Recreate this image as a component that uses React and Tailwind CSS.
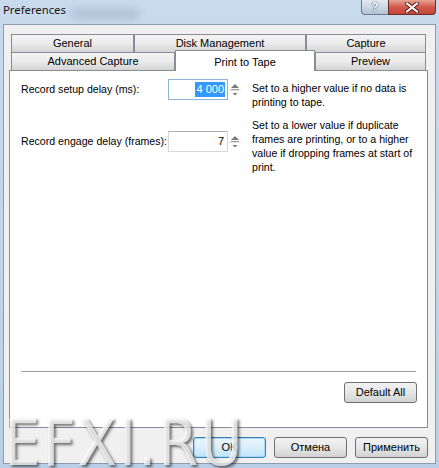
export default function App() {
  const tabBase =
    "h-[18px] border-t border-x border-[#898c95] bg-gradient-to-b from-[#f4f4f4] via-[#ebebeb] to-[#d4d4d4] flex items-center justify-center text-[11px] text-black";
  const btn =
    "w-[73px] h-[21px] rounded-[3px] border border-[#707070] bg-gradient-to-b from-[#f2f2f2] via-[#e6e6e6] to-[#d2d2d2] flex items-center justify-center text-[11px] text-black";
  return (
    <div className="relative w-[439px] h-[468px] overflow-hidden bg-gradient-to-b from-[#c8daee] to-[#b9cfe6] flex flex-col font-['Liberation_Sans',Arial,sans-serif]">
      {/* title bar */}
      <div className="relative h-[24px] flex items-start shrink-0">
        <div className="absolute left-[70px] top-[9px] w-[70px] h-[10px] rounded-full bg-[#8a9aac] opacity-40 blur-[4px]" />
        <span className="relative pl-[3px] pt-[2px] text-[11.3px] leading-[16px] text-[#161616] font-['Noto_Sans',sans-serif]">
          Preferences
        </span>
        <div className="ml-auto mr-[3px] flex">
          <div className="w-[27px] h-[15px] rounded-bl-[4px] border border-t-0 border-r-0 border-[#6c7b8e] bg-gradient-to-b from-[#e3eaf2] via-[#cdd8e4] to-[#b3c3d4] flex items-center justify-center">
            <span className="text-[12px] leading-[12px] font-bold text-white [text-shadow:0_0_1px_#3b4a5c,0_0_1px_#3b4a5c]">?</span>
          </div>
          <div className="w-[48px] h-[15px] rounded-br-[4px] border border-t-0 border-[#6b2a25] bg-gradient-to-b from-[#e6a596] via-[#d0594b] to-[#c5453b] flex items-center justify-center">
            <svg width="14" height="11" viewBox="0 0 14 11">
              <path d="M2 1.5 L12 9.5 M12 1.5 L2 9.5" stroke="#5a1c16" strokeWidth="4" strokeLinecap="round" />
              <path d="M2 1.5 L12 9.5 M12 1.5 L2 9.5" stroke="#ffffff" strokeWidth="2.2" strokeLinecap="round" />
            </svg>
          </div>
        </div>
      </div>

      {/* body */}
      <div className="flex-1 mx-[3px] mb-[4px] bg-[#f0f0f0] border border-[#8d9db0] flex flex-col pl-[5px] pt-[9px]">
        <div className="w-[419px] flex flex-col">
          <div className="flex pl-[2px]">
            <div className={`${tabBase} w-[123px]`}>General</div>
            <div className={`${tabBase} w-[172px]`}>Disk Management</div>
            <div className={`${tabBase} w-[120px]`}>Capture</div>
          </div>
          <div className="flex items-start pl-[2px]">
            <div className={`${tabBase} w-[164px]`}>Advanced Capture</div>
            <div className="relative z-10 w-[140px] h-[21px] -mt-[2px] -mb-[1px] border-t border-x border-[#898c95] bg-white flex items-start justify-center pt-[3px] text-[11px] text-black">
              Print to Tape
            </div>
            <div className={`${tabBase} w-[111px]`}>Preview</div>
          </div>
          <div className="h-[358px] border border-[#898c95] bg-white flex flex-col pt-[8px] text-[10.6px] text-black">
            {/* row 1 */}
            <div className="flex items-start pl-[11px]">
              <div className="w-[147px] h-[21px] flex items-center whitespace-nowrap">Record setup delay (ms):</div>
              <div className="w-[74px] h-[21px] flex">
                <div className="w-[60px] h-[21px] border border-[#8fb3d8] flex items-center justify-end pr-[2px] text-[11px]">
                  <span className="bg-[#3399ff] text-white px-[1px] leading-[15px]">4 000</span>
                </div>
                <Spin />
              </div>
              <div className="ml-[10px] mt-[2px] leading-[14px] whitespace-nowrap">
                Set to a higher value if no data is
                <br />
                printing to tape.
              </div>
            </div>
            {/* row 2 */}
            <div className="flex items-start pl-[11px] mt-[9px]">
              <div className="w-[147px] h-[21px] mt-[13px] flex items-center whitespace-nowrap">Record engage delay (frames):</div>
              <div className="w-[74px] h-[21px] mt-[13px] flex">
                <div className="w-[60px] h-[21px] border border-[#d5d9df] border-t-[#abadb3] flex items-center justify-end pr-[3px] text-[11px]">
                  7
                </div>
                <Spin />
              </div>
              <div className="ml-[10px] leading-[14px] whitespace-nowrap">
                Set to a lower value if duplicate
                <br />
                frames are printing, or to a higher
                <br />
                value if dropping frames at start of
                <br />
                print.
              </div>
            </div>

            <div className="mt-auto mx-[11px] border-t border-[#a0a0a0] border-b border-b-white" />
            <div className="self-end mr-[10px] mt-[9px] mb-[24px]">
              <div className={`${btn} h-[20px]`}>Default All</div>
            </div>
          </div>
        </div>

        <div className="flex justify-end gap-[8px] pr-[7px] mt-[9px]">
          <div className="w-[73px] h-[21px] rounded-[3px] border border-[#3c7fb1] bg-gradient-to-b from-[#eaf6fd] via-[#d9f0fc] to-[#bee6fd] flex items-center justify-center text-[11px] text-black shadow-[inset_0_0_0_1px_#a8d8f5]">
            OK
          </div>
          <div className={btn}>Отмена</div>
          <div className={btn}>Применить</div>
        </div>
      </div>

      {/* watermark */}
      <div className="absolute left-[4px] top-[408px] text-[64px] leading-[70px] tracking-[2px] text-[rgba(255,255,255,0.75)] font-['DejaVu_Sans_Condensed','DejaVu_Sans',sans-serif] [text-shadow:2px_2px_3px_rgba(0,0,0,0.55)] pointer-events-none select-none">
        EFXI.RU
      </div>
    </div>
  );
}

function Spin() {
  return (
    <div className="w-[14px] h-[21px]">
      <svg width="14" height="21" viewBox="0 0 14 21">
        <path d="M3 9 L7 5 L11 9 Z" fill="#7a7a7a" />
        <rect x="3" y="10" width="8" height="1" fill="#9a9a9a" />
        <rect x="1" y="11" width="12" height="1" fill="#e2e2e2" />
        <path d="M4.5 14 L9.5 14 L7 16.5 Z" fill="#7a7a7a" />
      </svg>
    </div>
  );
}
